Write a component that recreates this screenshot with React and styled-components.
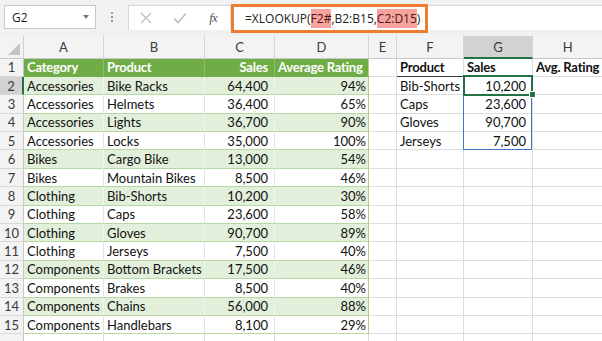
import React from "react";
import styled, { createGlobalStyle } from "styled-components";

const ROW_H = 18.4;
const COLS = "24px 80px 101px 70px 94px 28px 67px 69px 1fr";
const LETTERS = ["A", "B", "C", "D", "E", "F", "G", "H"];

const data = [
  ["Accessories", "Bike Racks", "64,400", "94%"],
  ["Accessories", "Helmets", "36,400", "65%"],
  ["Accessories", "Lights", "36,700", "90%"],
  ["Accessories", "Locks", "35,000", "100%"],
  ["Bikes", "Cargo Bike", "13,000", "54%"],
  ["Bikes", "Mountain Bikes", "8,500", "46%"],
  ["Clothing", "Bib-Shorts", "10,200", "30%"],
  ["Clothing", "Caps", "23,600", "58%"],
  ["Clothing", "Gloves", "90,700", "89%"],
  ["Clothing", "Jerseys", "7,500", "40%"],
  ["Components", "Bottom Brackets", "17,500", "46%"],
  ["Components", "Brakes", "8,500", "40%"],
  ["Components", "Chains", "56,000", "88%"],
  ["Components", "Handlebars", "8,100", "29%"],
];

const lookup = [
  ["Bib-Shorts", "10,200"],
  ["Caps", "23,600"],
  ["Gloves", "90,700"],
  ["Jerseys", "7,500"],
];

const GlobalStyle = createGlobalStyle`
  body {
    margin: 0;
    background: #fff;
    overflow: hidden;
  }
`;

const Page = styled.div`
  width: 602px;
  height: 341px;
  overflow: hidden;
  font-family: Lato, "Liberation Sans", sans-serif;
`;

const Toolbar = styled.div`
  height: 36px;
  background: #f1f1f1;
  display: flex;
  align-items: flex-start;
  padding: 5px 0 0 4px;
  box-sizing: border-box;
`;

const NameBox = styled.div`
  width: 92px;
  height: 24px;
  box-sizing: border-box;
  background: #fff;
  border: 1px solid #c9c9c9;
  display: flex;
  align-items: center;
  justify-content: space-between;
  padding: 0 4px 0 7px;
  font-family: "Open Sans", sans-serif;
  font-size: 12px;
  color: #222;
`;

const Caret = styled.span`
  width: 0;
  height: 0;
  border-left: 3.5px solid transparent;
  border-right: 3.5px solid transparent;
  border-top: 4px solid #777;
  margin-right: 2px;
`;

const Dots = styled.div`
  width: 32px;
  height: 24px;
  display: flex;
  flex-direction: column;
  align-items: center;
  justify-content: center;
  gap: 2px;

  span {
    width: 2px;
    height: 2px;
    background: #9a9a9a;
  }
`;

const FormulaBar = styled.div`
  flex: 1;
  height: 25px;
  background: #fff;
  border-top: 1px solid #d6d6d6;
  border-left: 1px solid #d6d6d6;
  box-sizing: border-box;
  display: flex;
  align-items: flex-start;
`;

const Buttons = styled.div`
  width: 102px;
  height: 24px;
  display: flex;
  align-items: center;
  border-right: 1px solid #e3e3e3;
  box-sizing: border-box;
`;

const IconSlot = styled.div`
  width: ${(p) => p.$w}px;
  display: flex;
  justify-content: center;
  align-items: center;
`;

const Fx = styled.span`
  font-family: "Liberation Serif", serif;
  font-style: italic;
  font-size: 13px;
  color: #555;
  letter-spacing: -1px;
`;

const FormulaBox = styled.div`
  width: 197px;
  height: 29px;
  margin-top: -2px;
  box-sizing: border-box;
  border: 3px solid #ed7d31;
  background: #fff;
  display: flex;
  align-items: center;
  padding-left: 11px;
  font-family: "Open Sans", sans-serif;
  font-size: 12px;
  color: #222;
  white-space: nowrap;
`;

const Ref = styled.span`
  background: #f7a39d;
  color: #4a1410;
  padding: 1px 0;
`;

const Grid = styled.div`
  display: grid;
  grid-template-columns: ${COLS};
  grid-template-rows: 22.5px;
  grid-auto-rows: ${ROW_H}px;
`;

const Corner = styled.div`
  background: #f3f3f3;
  border-right: 1px solid #d0d0d0;
  border-bottom: 1px solid #c8c8c8;
  box-sizing: border-box;
  display: flex;
  align-items: flex-end;
  justify-content: flex-end;
  padding: 0 3px 3px 0;

  span {
    width: 0;
    height: 0;
    border-left: 12px solid transparent;
    border-bottom: 12px solid #c4c4c4;
  }
`;

const ColHead = styled.div`
  background: ${(p) => (p.$active ? "#d2d2d2" : "#f3f3f3")};
  border-right: 1px solid #d4d4d4;
  border-bottom: ${(p) => (p.$active ? "2px solid #217346" : "1px solid #c8c8c8")};
  box-sizing: border-box;
  display: flex;
  align-items: center;
  justify-content: center;
  font-size: 13px;
  color: #3a3a3a;
  padding-top: 1px;
`;

const RowHead = styled.div`
  background: ${(p) => (p.$active ? "#d2d2d2" : "#f3f3f3")};
  border-right: ${(p) => (p.$active ? "2px solid #217346" : "1px solid #c8c8c8")};
  border-bottom: 1px solid #d8d8d8;
  box-sizing: border-box;
  display: flex;
  align-items: center;
  justify-content: center;
  font-size: 13px;
  color: #3a3a3a;
`;

const Cell = styled.div`
  position: relative;
  background: ${(p) => p.$bg || "#fff"};
  color: ${(p) => p.$color || "#111"};
  font-weight: ${(p) => (p.$bold ? 700 : 400)};
  border-right: 1px solid ${(p) => p.$rb || "#dcdcdc"};
  border-bottom: 1px solid ${(p) => p.$bb || "#dcdcdc"};
  box-sizing: border-box;
  display: flex;
  align-items: center;
  justify-content: ${(p) => (p.$right ? "flex-end" : "flex-start")};
  padding: 0 ${(p) => p.$pr ?? 3}px 0 3px;
  font-size: 13px;
  letter-spacing: ${(p) => (p.$bold ? "-0.2px" : "0")};
  white-space: nowrap;
`;

const SpillBorder = styled.div`
  position: absolute;
  z-index: 2;
  left: -1px;
  top: -1px;
  width: calc(100% + 1px);
  height: ${ROW_H * 4 + 1}px;
  border: 1px solid #4472c4;
  box-sizing: border-box;
  pointer-events: none;
`;

const ActiveBorder = styled.div`
  position: absolute;
  z-index: 3;
  left: -1px;
  top: -1.5px;
  width: calc(100% + 2px);
  height: ${ROW_H + 2}px;
  border: 2px solid #217346;
  box-sizing: border-box;

  &::after {
    content: "";
    position: absolute;
    right: -4.5px;
    bottom: -4.5px;
    width: 5px;
    height: 5px;
    background: #217346;
    border: 1px solid #fff;
  }
`;

function XIcon() {
  return (
    <svg width="12" height="12" viewBox="0 0 12 12">
      <path d="M1 1L11 11M11 1L1 11" stroke="#bdbdbd" strokeWidth="1.3" fill="none" />
    </svg>
  );
}

function CheckIcon() {
  return (
    <svg width="14" height="12" viewBox="0 0 14 12">
      <path d="M1 6.5L5 10.5L13 1.5" stroke="#bdbdbd" strokeWidth="1.6" fill="none" />
    </svg>
  );
}

function tableRowCells(row, i, n) {
  const band = i % 2 === 0;
  const bg = band ? "#e2efda" : "#fff";
  const inner = band ? "#eef6e9" : "#e3e3e3";
  const bb = "#b7d8a0";
  return [
    <Cell key={`${n}a`} $bg={bg} $rb={inner} $bb={bb}>{row[0]}</Cell>,
    <Cell key={`${n}b`} $bg={bg} $rb={inner} $bb={bb}>{row[1]}</Cell>,
    <Cell key={`${n}c`} $bg={bg} $rb={inner} $bb={bb} $right $pr={6}>{row[2]}</Cell>,
    <Cell key={`${n}d`} $bg={bg} $rb="#a9d08e" $bb={bb} $right $pr={2}>{row[3]}</Cell>,
  ];
}

function App() {
  const rows = [];

  // header row 1
  rows.push(
    <RowHead key="r1">1</RowHead>,
    <Cell key="1a" $bg="#70ad47" $color="#fff" $bold $rb="#8cc063" $bb="#70ad47">Category</Cell>,
    <Cell key="1b" $bg="#70ad47" $color="#fff" $bold $rb="#8cc063" $bb="#70ad47">Product</Cell>,
    <Cell key="1c" $bg="#70ad47" $color="#fff" $bold $rb="#8cc063" $bb="#70ad47" $right $pr={6}>Sales</Cell>,
    <Cell key="1d" $bg="#70ad47" $color="#fff" $bold $rb="#a9d08e" $bb="#70ad47">Average Rating</Cell>,
    <Cell key="1e" />,
    <Cell key="1f" $bold $bb="#3c3c3c">Product</Cell>,
    <Cell key="1g" $bold $bb="#3c3c3c">Sales</Cell>,
    <Cell key="1h" $bold>Avg. Rating</Cell>
  );

  data.forEach((row, i) => {
    const n = i + 2;
    const lk = lookup[i];
    rows.push(
      <RowHead key={`r${n}`} $active={n === 2}>{n}</RowHead>,
      ...tableRowCells(row, i, n),
      <Cell key={`${n}e`} />,
      <Cell key={`${n}f`}>{lk ? lk[0] : ""}</Cell>,
      <Cell key={`${n}g`} $right $pr={6}>
        {lk ? lk[1] : ""}
        {n === 2 && <SpillBorder />}
        {n === 2 && <ActiveBorder />}
      </Cell>,
      <Cell key={`${n}h`} />
    );
  });

  rows.push(<RowHead key="r16" />);
  for (let c = 0; c < 8; c++) rows.push(<Cell key={`16-${c}`} />);

  return (
    <Page>
      <GlobalStyle />
      <Toolbar>
        <NameBox>
          G2
          <Caret />
        </NameBox>
        <Dots>
          <span />
          <span />
          <span />
        </Dots>
        <FormulaBar>
          <Buttons>
            <IconSlot $w={34}>
              <XIcon />
            </IconSlot>
            <IconSlot $w={34}>
              <CheckIcon />
            </IconSlot>
            <IconSlot $w={32}>
              <Fx>fx</Fx>
            </IconSlot>
          </Buttons>
          <FormulaBox>
            =XLOOKUP(<Ref>F2#</Ref>,B2:B15,<Ref>C2:D15</Ref>)
          </FormulaBox>
        </FormulaBar>
      </Toolbar>
      <Grid>
        <Corner>
          <span />
        </Corner>
        {LETTERS.map((l) => (
          <ColHead key={l} $active={l === "G"}>
            {l}
          </ColHead>
        ))}
        {rows}
      </Grid>
    </Page>
  );
}

export default App;
